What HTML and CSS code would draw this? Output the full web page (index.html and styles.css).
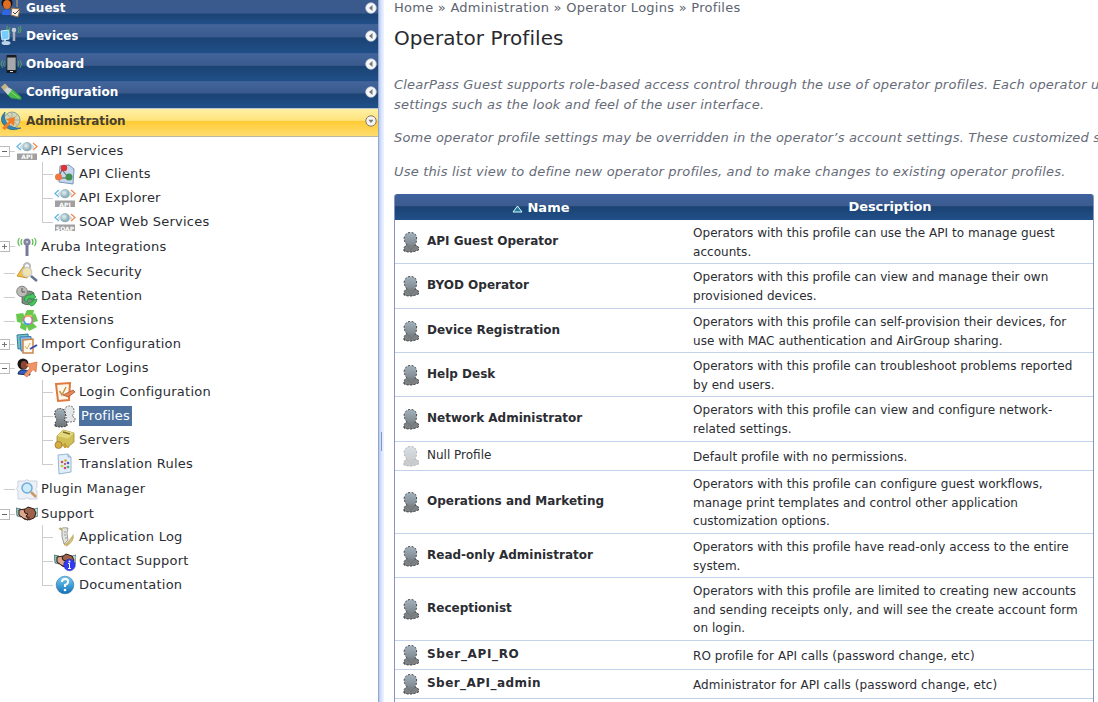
FILE: index.html
```html
<!DOCTYPE html>
<html lang="en">
<head>
<meta charset="utf-8">
<title>Operator Profiles</title>
<link rel="stylesheet" href="styles.css">
</head>
<body>
<svg class="defs" aria-hidden="true">
<defs>
<linearGradient id="gGrey" x1="0" y1="0" x2="0" y2="1"><stop offset="0" stop-color="#a3b2bd"/><stop offset="1" stop-color="#6c7277"/></linearGradient>
<linearGradient id="gBlue" x1="0" y1="0" x2="0" y2="1"><stop offset="0" stop-color="#7ad0f4"/><stop offset="1" stop-color="#1271b8"/></linearGradient>
<radialGradient id="gEye" cx=".4" cy=".4"><stop offset="0" stop-color="#e5f1f3"/><stop offset="1" stop-color="#8aacb8"/></radialGradient>
<symbol id="person" viewBox="0 0 18 22"><path d="M2 20 L2 16.5 Q3 15 5 14 Q1.5 10 2.3 6 Q4 1.5 8.5 1.5 Q13.5 1.5 14.5 6 Q15 11 13 14 Q16.5 15 16.5 17 L16.5 19 Q9 22.5 2 20Z" fill="url(#gGrey)"/><path d="M2 16.5 Q3 15 5 14 L13 14 Q16.5 15 16.5 17 L16.5 19 Q9 22.5 2 20Z" fill="#7d8183"/><path d="M2 20 L2 16.5 Q3 15 5 14 Q1.5 10 2.3 6 Q4 1.5 8.5 1.5 Q13.5 1.5 14.5 6 Q15 11 13 14 Q16.5 15 16.5 17 L16.5 19 Q9 22.5 2 20Z" fill="none" stroke="#343a3f" stroke-dasharray="2 1.6"/><path d="M5 14 L9 19 L13 14" fill="none" stroke="#686f74" stroke-width=".7"/></symbol>
<symbol id="eye" viewBox="0 0 22 20"><path d="M5 2 L1 5.5 L5 9" fill="none" stroke="#5fb7e8" stroke-width="1.3"/><path d="M17 2 L21 5.5 L17 9" fill="none" stroke="#ee8a54" stroke-width="1.3"/><path d="M4 6 Q11 -2 18 6 Q11 13 4 6Z" fill="#dce5e6" stroke="#c0cbce" stroke-width=".7"/><circle cx="11" cy="5.7" r="4.6" fill="url(#gEye)"/><rect x="1" y="12.5" width="20" height="6.5" fill="#a0a0a0"/></symbol>
<symbol id="hands" viewBox="0 0 22 20"><path d="M0 4 L5 5 L5 13 L1 12Z" fill="#8dc2be" stroke="#344" stroke-width=".6"/><path d="M22 4 L18 5 L19 13 L22 12Z" fill="#b6dfda" stroke="#344" stroke-width=".6"/><path d="M3 6 L9 5 L13 8 L16 13 L12 16 L7 14 L3 11Z" fill="#dba68b" stroke="#2b1915"/><path d="M8 6 L12 3 L18 5 L20 9 L18 14 L13 16 L10 12 L12 10 L9 9Z" fill="#9e624b" stroke="#2b1915"/><path d="M5 12 L8 15 L12 16 M10 12 L14 14" stroke="#4e2b20" fill="none"/></symbol>
<symbol id="left" viewBox="0 0 12 12"><circle cx="6" cy="6" r="5.3" fill="#f5f6f8" stroke="#c3cad5" stroke-width=".7"/><path d="M7.5 3 V9 L4 6Z" fill="#777"/></symbol>
<symbol id="down" viewBox="0 0 12 12"><circle cx="6" cy="6" r="5.2" fill="#f5f5f5" stroke="#827960" stroke-width="1"/><path d="M3.5 4.7 H8.5 L6 8Z" fill="#777"/></symbol>
</defs>
</svg>
<div class="app">
<aside class="sidebar">
<nav class="sections">
<div class="section guest"><svg class="sico" viewBox="0 0 22 22"><circle cx="7" cy="6" r="5.5" fill="#111"/><ellipse cx="7" cy="7.5" rx="4" ry="4.5" fill="#e06d20"/><path d="M2 18 Q2 12 8 13 Q12 13 12 18Z" fill="#2f66ea"/><path d="M17 2 V10" stroke="#c6a36c"/><path d="M12 11 L20 12 L18 20 L11 18Z" fill="#f5eee2" stroke="#9a6c3c"/><path d="M13 15 L15 17 L20 12" fill="none" stroke="#444"/></svg><span>Guest</span><svg class="arrow"><use href="#left"/></svg></div>
<div class="section devices"><svg class="sico" viewBox="0 0 22 22"><path d="M1 6 L9 5 V14 L2 15Z" fill="#76ccfa" stroke="#d8efff"/><ellipse cx="6" cy="18" rx="4.5" ry="2" fill="#bbd5ed"/><path d="M5 15 V18" stroke="#bcd" stroke-width="2"/><path d="M14 5 V16" stroke="#a9b2ba" stroke-width="2.5"/><circle cx="14" cy="5" r="2.3" fill="#c7ced5"/><path d="M10 2 Q8 5 10 8 M18 2 Q20 5 18 8 M7.5 1 Q6 3 7 5 M20 1 Q22 4 20 8" fill="none" stroke="#4eaa67"/></svg><span>Devices</span><svg class="arrow"><use href="#left"/></svg></div>
<div class="section onboard"><svg class="sico" viewBox="0 0 22 22"><rect x="6.5" y="2" width="10" height="18" rx="1" fill="#191b1d"/><rect x="7.3" y="4.5" width="8.4" height="12.5" fill="#a4a9ab"/><path d="M10 18.5h3" stroke="#ddd"/><path d="M4.5 8 Q2.5 11 4.5 14 M2.5 7 Q-.5 11 2.5 15 M18 8 Q20 11 18 14 M20 7 Q23 11 20 15" fill="none" stroke="#559d78"/></svg><span>Onboard</span><svg class="arrow"><use href="#left"/></svg></div>
<div class="section configuration"><svg class="sico" viewBox="0 0 22 22"><path d="M8 9 L12 8 L21 16 L21 18.5 L11 17 L7 13Z" fill="#49b84b" stroke="#2c9342" stroke-width=".7"/><path d="M10 10 L19 17" stroke="#8fd873"/><path d="M6 5 L12 8.5 L8 14 L3.5 9Z" fill="#ced4d2"/><path d="M1 6 L5 2.5 L8 5.5 L4 9.5Z" fill="#c8b583"/></svg><span>Configuration</span><svg class="arrow"><use href="#left"/></svg></div>
<div class="section administration"><svg class="sico" viewBox="0 0 22 22"><circle cx="12" cy="10" r="8" fill="#d2d3b7" stroke="#8ca69a"/><path d="M12 2 V18 M4 10 H20 M7 4 L18 16 M6 16 L18 4" stroke="#8ca69a" stroke-width=".7"/><path d="M5 2 Q-1 8 3 14 Q9 23 21 18 Q11 19 6 12 Q3 8 5 2Z" fill="#3086b4" stroke="#216489" stroke-width=".7"/><path d="M2 18 L9 11 L6 9 L15 7 L14 16 L11 13 L5 20Z" fill="#f37c23"/></svg><span>Administration</span><svg class="arrow"><use href="#down"/></svg></div>
</nav>
<ul class="tree">
<li class="row h23"><i class="toggle"></i><svg class="ico"><use href="#eye"/></svg><b class="tag">API</b><span>API Services</span></li>
<li class="row sub"><svg class="ico" viewBox="0 0 22 20"><path d="M6 2 L15 1 L20 5 L19 20 L5 18Z" fill="#c7d8ec" stroke="#7895bb"/><path d="M8 6 L4 14 H15Z" fill="none" stroke="#555"/><circle cx="10" cy="4" r="3.2" fill="#db3437"/><circle cx="4.5" cy="13" r="3.5" fill="#ed7843"/><circle cx="15" cy="13" r="3.5" fill="#438f50"/></svg><span>API Clients</span></li>
<li class="row sub"><svg class="ico"><use href="#eye"/></svg><b class="tag">API</b><span>API Explorer</span></li>
<li class="row sub last"><svg class="ico"><use href="#eye"/></svg><b class="tag">SOAP</b><span>SOAP Web Services</span></li>
<li class="row h26"><i class="toggle plus"></i><svg class="ico" viewBox="0 0 22 20"><path d="M11 5 V19" stroke="#77799b" stroke-width="3"/><circle cx="11" cy="5" r="3.6" fill="#81829d"/><circle cx="11" cy="5" r="1.3" fill="#c0c2d4"/><path d="M6 2 Q4 5 6 8 M3.5 1 Q.5 5 3.5 9 M16 2 Q18 5 16 8 M18.5 1 Q21.5 5 18.5 9" fill="none" stroke="#58b94d" stroke-width="1.2"/></svg><span>Aruba Integrations</span></li>
<li class="row leaf"><svg class="ico" viewBox="0 0 22 20"><path d="M8 6 V3 Q11 -1 14 3 V7" fill="none" stroke="#bbb" stroke-width="2"/><path d="M1 14 L7 5 L15 8 L11 16Z" fill="#eebd46" stroke="#cc982b"/><circle cx="11" cy="10" r="4.7" fill="#f0e3ae" stroke="#ccc" stroke-width="1.4"/><path d="M15 14 L21 19" stroke="#63728f" stroke-width="2.4"/></svg><span>Check Security</span></li>
<li class="row leaf"><svg class="ico" viewBox="0 0 22 20"><path d="M6 7 Q14 3 18 7 V16 Q13 21 6 17Z" fill="#7e8e80" stroke="#334b3b" stroke-width=".7"/><circle cx="6" cy="5.5" r="5.3" fill="#bcbbb8" stroke="#858481"/><path d="M6 2 V6 H9" fill="none" stroke="#555"/><path d="M8 14 Q9 8 15 9 L16 7 L20 11 L15 14 V12 Q11 12 11 16Z M21 13 Q20 19 15 20 L12 17 Q17 17 17 14Z" fill="#48c75a" stroke="#238c48" stroke-width=".8"/></svg><span>Data Retention</span></li>
<li class="row leaf"><svg class="ico" viewBox="0 0 22 20"><g fill="#69c94f"><path d="M8 6 L11 0 L18 0 L17 6 L13 5Z"/><path d="M15 7 L19 3 L22 11 L16 13Z"/><path d="M16 12 L21 17 L13 21 L10 15Z"/><path d="M5 12 L11 15 L10 21 L4 18Z"/><path d="M0 4 L7 3 L9 7 L6 13 L1 12Z"/></g><circle cx="12" cy="10" r="4.3" fill="#fff" stroke="#d964bf" stroke-width="1.6"/><path d="M9 7 Q12 4 15 7" stroke="#edb32f" stroke-width="1.6" fill="none"/><path d="M8 11 Q9 15 13 14" stroke="#3ca4e5" stroke-width="1.6" fill="none"/></svg><span>Extensions</span></li>
<li class="row"><i class="toggle plus"></i><svg class="ico" viewBox="0 0 22 20"><path d="M1 1 L12 0 L13 14 L2 15Z" fill="#75c3c4" stroke="#347d9b"/><path d="M4 3 L15 2.5 V17 H5Z" fill="#8dbbe6" stroke="#397ab3"/><path d="M7 6 L17 5 V19 H7Z" fill="#fff7ec" stroke="#c8874c" stroke-width="1.5"/><path d="M9 12 L11 15 L14 9" fill="none" stroke="#d9b24e"/><path d="M14 15 L21 11" stroke="#334ab1" stroke-width="2"/></svg><span>Import Configuration</span></li>
<li class="row"><i class="toggle"></i><svg class="ico" viewBox="0 0 22 20"><circle cx="7" cy="6" r="5.5" fill="#161414"/><ellipse cx="8" cy="7" rx="3.3" ry="4" fill="#8c4733"/><path d="M2 16 Q3 11 8 12 Q14 12 14 17Z" fill="#315fc2" stroke="#142b54"/><path d="M8 17 L14 10 L10 6.5 L21 4 L20 14 L17 11.5 L11 19Z" fill="#ef9468" stroke="#d9713e" stroke-width=".7"/></svg><span>Operator Logins</span></li>
<li class="row sub"><svg class="ico" viewBox="0 0 22 20"><path d="M2 2 L16 1 L15 18 L4 19Z" fill="#fff7e9" stroke="#df7940" stroke-width="2"/><path d="M5.5 9 L8 13 L12 5" fill="none" stroke="#c29548" stroke-width="1.5"/><path d="M9 13 L19 8 L21 10 L14 15Z" fill="#e88955" stroke="#96492d" stroke-width=".7"/></svg><span>Login Configuration</span></li>
<li class="row sub selected"><svg class="ico" viewBox="0 0 22 20"><g stroke-dasharray="1.8 1.2"><path d="M10 15 L13 11 Q9 5 12 1 Q17 -1.5 19.5 2 Q21 7 18 10 L21 12 V15 Q15 17 10 15Z" fill="#e3e6e8" stroke="#666"/><path d="M1 20 V17 L3 14 Q-1 8 2 4 Q6 1 10 4 Q13 9 10 14 L13 16 V20 Q6 22 1 20Z" fill="url(#gGrey)" stroke="#333"/></g></svg><span>Profiles</span></li>
<li class="row sub"><svg class="ico" viewBox="0 0 22 20"><path d="M3 6 L9 0 L20 3 V12 L14 17 L3 14Z" fill="#cfbf55" stroke="#a08d38" stroke-width=".8"/><path d="M3 6 L14 8.5 L20 3 L9 0Z" fill="#e4d97c"/><path d="M9 2 L16 4" stroke="#796a27" stroke-width="1.5"/><circle cx="4.5" cy="15" r="3.5" fill="#d5ad40" stroke="#946f26" stroke-width=".7"/><path d="M8 15 L15 17 M11 13 V18" stroke="#c79d38" stroke-width="2"/></svg><span>Servers</span></li>
<li class="row sub last"><svg class="ico" viewBox="0 0 22 20"><path d="M4 1 L14 0 L17 3 V18 L5 20Z" fill="#e0eefb" stroke="#9ab5d0"/><path d="M14 0 V3 H17" fill="#bed6ed" stroke="#9ab5d0"/><g><circle cx="8" cy="8" r="1.3" fill="#d3543d"/><circle cx="11.5" cy="6.5" r="1.3" fill="#d4a728"/><circle cx="14" cy="9" r="1.3" fill="#4b56cf"/><circle cx="8" cy="12" r="1.3" fill="#d4c228"/><circle cx="11" cy="14" r="1.3" fill="#c64c87"/><circle cx="14" cy="13" r="1.3" fill="#58a955"/><circle cx="11" cy="10" r="1.1" fill="#b34242"/></g></svg><span>Translation Rules</span></li>
<li class="row leaf h26"><svg class="ico" viewBox="0 0 22 20"><path d="M2 2 H9 Q10 -1 13 2 H21 V8 Q18 10 21 12 V20 H13 Q11 17 9 20 H2 V12 Q-1 10 2 7Z" fill="#edf0f7" stroke="#ccd3e2"/><circle cx="11" cy="9" r="5" fill="#ccecfa" stroke="#70acd5" stroke-width="1.5"/><path d="M15 13 L20 18" stroke="#ca9961" stroke-width="2.5"/></svg><span>Plugin Manager</span></li>
<li class="row h23"><i class="toggle"></i><svg class="ico"><use href="#hands"/></svg><span>Support</span></li>
<li class="row sub"><svg class="ico" viewBox="0 0 22 20"><path d="M6 2 Q9 0 14 1 Q12 5 14 13 L10 17 Q7 9 8 4Z" fill="#e4e4de" stroke="#888" stroke-width=".8"/><path d="M5 2 Q8 0 8 4 M10 18 Q14 17 19 9 Q20 14 12 19" fill="none" stroke="#c5b26b" stroke-width="1.5"/><path d="M10 5h2M10 8h2M11 11h2" stroke="#999"/></svg><span>Application Log</span></li>
<li class="row sub"><svg class="ico" viewBox="0 0 22 20"><use href="#hands"/><circle cx="15.5" cy="14" r="5.8" fill="#343bef" stroke="#1720ba" stroke-width=".5"/><path d="M15.5 12.5 V17.5 M14 17.5h3M14 12.5h1.5" stroke="#fff"/><circle cx="15.5" cy="10.5" r=".9" fill="#fff"/></svg><span>Contact Support</span></li>
<li class="row sub last"><svg class="ico" viewBox="0 0 22 20"><circle cx="11" cy="10" r="8.8" fill="url(#gBlue)" stroke="#286fa0" stroke-width=".6"/><path d="M8 7 Q8 4 11 4 Q14.5 4 14 7 Q14 9 11 10 V12" fill="none" stroke="#fff" stroke-width="2"/><circle cx="11" cy="15" r="1.3" fill="#fff"/></svg><span>Documentation</span></li>
</ul>
</aside>
<div class="splitter"><div class="grip"></div></div>
<main class="content">
<div class="crumbs">Home » Administration » Operator Logins » Profiles</div>
<h1>Operator Profiles</h1>
<div class="intro">
<p class="i1">ClearPass Guest supports role-based access control through the use of operator profiles. Each operator u<br>settings such as the look and feel of the user interface.</p>
<p class="i2">Some operator profile settings may be overridden in the operator’s account settings. These customized s</p>
<p class="i3">Use this list view to define new operator profiles, and to make changes to existing operator profiles.</p>
</div>
<section class="table">
<header class="thead"><div class="name"><svg class="sort" viewBox="0 0 11 8"><path d="M1 7 L5.5 1 L10 7Z" fill="#27779f" stroke="#d6ffff"/></svg><span>Name</span></div><div class="desc"><span>Description</span></div></header>
<div class="trow r44"><div class="name"><svg class="pico"><use href="#person"/></svg><span>API Guest Operator</span></div><div class="desc">Operators with this profile can use the API to manage guest<br>accounts.</div></div>
<div class="trow r45"><div class="name"><svg class="pico"><use href="#person"/></svg><span>BYOD Operator</span></div><div class="desc">Operators with this profile can view and manage their own<br>provisioned devices.</div></div>
<div class="trow r44"><div class="name"><svg class="pico"><use href="#person"/></svg><span>Device Registration</span></div><div class="desc">Operators with this profile can self-provision their devices, for<br>use with MAC authentication and AirGroup sharing.</div></div>
<div class="trow r44"><div class="name"><svg class="pico"><use href="#person"/></svg><span>Help Desk</span></div><div class="desc">Operators with this profile can troubleshoot problems reported<br>by end users.</div></div>
<div class="trow r45"><div class="name"><svg class="pico"><use href="#person"/></svg><span>Network Administrator</span></div><div class="desc">Operators with this profile can view and configure network-<br>related settings.</div></div>
<div class="trow r29 disabled"><div class="name"><svg class="pico"><use href="#person"/></svg><span>Null Profile</span></div><div class="desc">Default profile with no permissions.</div></div>
<div class="trow r63"><div class="name"><svg class="pico"><use href="#person"/></svg><span>Operations and Marketing</span></div><div class="desc">Operators with this profile can configure guest workflows,<br>manage print templates and control other application<br>customization options.</div></div>
<div class="trow r44"><div class="name"><svg class="pico"><use href="#person"/></svg><span>Read-only Administrator</span></div><div class="desc">Operators with this profile have read-only access to the entire<br>system.</div></div>
<div class="trow r63"><div class="name"><svg class="pico"><use href="#person"/></svg><span>Receptionist</span></div><div class="desc">Operators with this profile are limited to creating new accounts<br>and sending receipts only, and will see the create account form<br>on login.</div></div>
<div class="trow r29 api"><div class="name"><svg class="pico"><use href="#person"/></svg><span class="wide">Sber_API_RO</span></div><div class="desc">RO profile for API calls (password change, etc)</div></div>
<div class="trow r29 api"><div class="name"><svg class="pico"><use href="#person"/></svg><span>Sber_API_admin</span></div><div class="desc">Administrator for API calls (password change, etc)</div></div>
<div class="trow r29"></div>
</section>
</main>
</div>
</body>
</html>
```
FILE: styles.css
```css
* { box-sizing: border-box; }
body { margin: 0; width: 1098px; height: 702px; overflow: hidden; background: #fff; color: #2b2d33; font: 13px "DejaVu Sans", sans-serif; }
.defs { position: absolute; width: 0; height: 0; }
.app { display: flex; width: 1098px; height: 702px; overflow: hidden; }
.sidebar { width: 378px; flex: none; }
.section { display: flex; align-items: center; height: 28px; padding-right: 1px; color: #fff; font-weight: bold; font-size: 12px; line-height: 16px; background: linear-gradient(#385a91 0, #41649a 3%, #3a5a8d 44%, #1b4374 48%, #204f88 100%); }
.guest { height: 24px; padding-bottom: 9px; background: linear-gradient(#3a5a8d 0 13px, #1b4374 14px, #204f88); }
.devices { height: 29px; padding-bottom: 5px; }
.onboard { padding-bottom: 6px; }
.configuration { height: 27px; padding-bottom: 5px; }
.administration { height: 29px; padding-bottom: 4px; color: #46402e; border-top: 1px solid #bac3d0; border-bottom: 1px solid #bdb69e; background: linear-gradient(#fff0a5, #ffe37b 42%, #ffcc35 46%, #ffdc70); }
.section span { flex: 1; }
.administration span { letter-spacing: -.08px; }
.sico { width: 22px; height: 22px; flex: none; margin-right: 4px; }
.arrow { width: 12px; height: 12px; flex: none; }
.tree { list-style: none; margin: 0; padding: 2px 0 0; letter-spacing: .24px; }
.row { display: flex; align-items: center; position: relative; height: 24px; padding-left: 16px; }
.row.h23 { height: 23px; }
.row.h26 { height: 26px; }
.row.sub { padding-left: 54px; }
.row span { line-height: 20px; white-space: nowrap; }
.ico { width: 22px; height: 20px; flex: none; margin-right: 3px; overflow: visible; }
.toggle { position: absolute; left: -1px; top: 7px; width: 11px; height: 11px; border: 1px solid #bbb; background: linear-gradient(#666, #666) center / 5px 1px no-repeat; }
.toggle.plus { background: linear-gradient(#777, #777) center / 5px 1px no-repeat, linear-gradient(#777, #777) center / 1px 5px no-repeat; }
.toggle::after { content: ""; position: absolute; left: 10px; top: 4px; width: 5px; border-top: 1px solid #ccc; }
.leaf::before { content: ""; position: absolute; left: 4px; top: 13px; width: 11px; border-top: 1px solid #ccc; }
.sub::before { content: ""; position: absolute; left: 42px; top: 0; bottom: 0; border-left: 1px solid #ccc; }
.sub.last::before { bottom: auto; height: 13px; }
.sub::after { content: ""; position: absolute; left: 42px; top: 12px; width: 11px; border-top: 1px solid #ccc; }
.tag { position: absolute; left: 17px; bottom: 2px; width: 20px; color: #fff; font-size: 6px; line-height: 7px; letter-spacing: 0; text-align: center; }
.sub .tag { left: 55px; }
.selected span { padding: 0 2px; background: #4c719f; color: #fff; }
.splitter { width: 6px; flex: none; border-left: 1px solid #94a5d0; background: linear-gradient(90deg, #b9c9ee, #dce7ff 55%, #eef3ff); }
.grip { margin: 432px 0 0 2px; width: 1px; height: 19px; background: #7f99c2; }
.content { width: 714px; flex: none; padding-left: 10px; }
.crumbs { height: 18px; line-height: 15px; color: #5d6470; letter-spacing: .26px; white-space: nowrap; }
h1 { margin: 7px 0 0; font-size: 20px; line-height: 26px; letter-spacing: .06px; font-weight: normal; color: #292a2e; }
.intro { height: 143px; padding-top: 24px; color: #666b78; font-style: italic; line-height: 20px; letter-spacing: .185px; white-space: nowrap; }
.intro p { margin: 0 0 13px; }
.intro .i2 { margin-bottom: 14px; }
.table { width: 700px; border: 1px solid #8595bd; border-top: 0; border-radius: 3px 3px 0 0; overflow: hidden; }
.thead { display: flex; height: 26px; align-items: center; color: #fff; font-weight: bold; background: linear-gradient(#3e629d, #3c5c90 45%, #1b4374 49%, #204f88); }
.thead .name { width: 292px; justify-content: center; }
.thead .desc { width: 406px; padding: 1px 0 0; text-align: center; font-size: 13px; letter-spacing: -.1px; }
.sort { width: 11px; height: 8px; margin: 3px 4px 0 0; }
.trow { display: flex; align-items: center; border-bottom: 1px solid #c3d2e8; }
.r29 { height: 29px; }
.r44 { height: 44px; }
.r45 { height: 45px; }
.r63 { height: 63px; }
.name { display: flex; align-items: center; width: 292px; flex: none; }
.trow .name { padding: 0 0 2px 7px; font-size: 12px; font-weight: bold; }
.pico { width: 18px; height: 22px; margin: 2px 7px 0 0; }
.desc { padding: 2px 0 0 6px; font-size: 12px; line-height: 18.6px; letter-spacing: .04px; white-space: nowrap; }
.api .name { letter-spacing: .45px; }
.api .name .wide { letter-spacing: .65px; }
.api .desc { letter-spacing: .085px; }
.disabled .name { font-weight: normal; }
.disabled .pico { opacity: .4; }
```
